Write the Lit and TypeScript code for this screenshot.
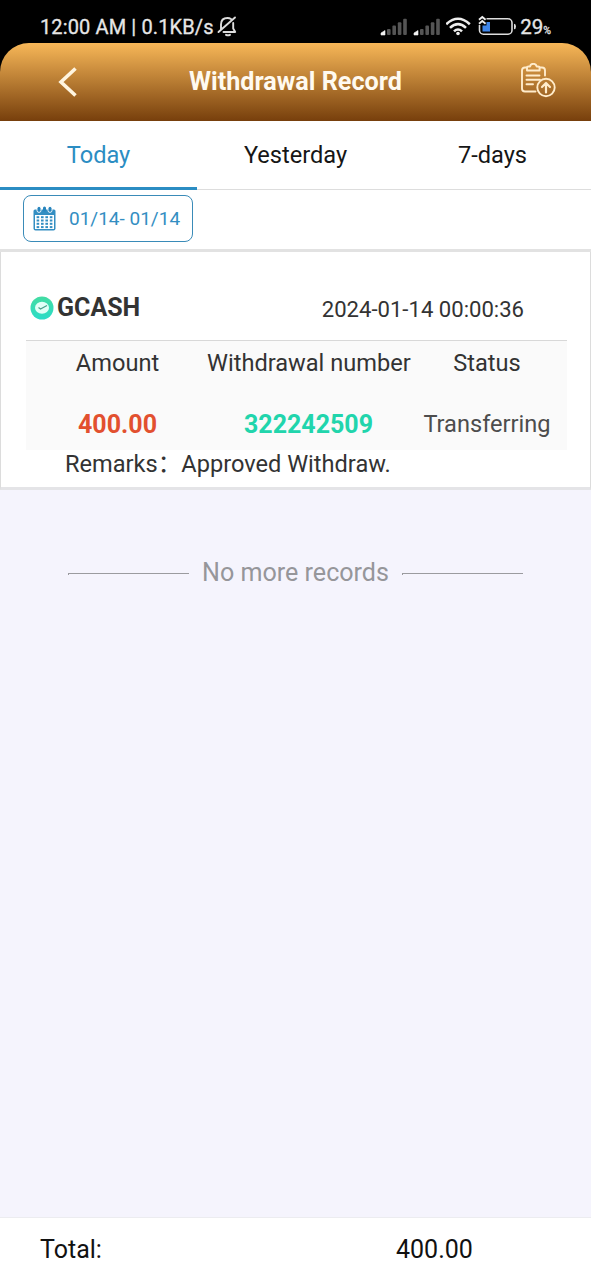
import { LitElement, html, css, svg } from "lit";
import { customElement, state } from "lit/decorators.js";

@customElement("status-bar")
class StatusBar extends LitElement {
  static styles = css`
    :host { display: flex; height: 43px; box-sizing: border-box; padding: 15px 40px 4px 40px; justify-content: space-between; color: #e6e6e6; font-size: 20px; line-height: 25px; }
    .side { display: flex; }
    .clock { width: 176px; white-space: nowrap; letter-spacing: 0.12px; -webkit-text-stroke: 0.3px #e6e6e6; }
    svg { display: block; flex: none; }
    .pct { font-size: 20.5px; margin-left: 2px; white-space: nowrap; -webkit-text-stroke: 0.3px #e6e6e6; }
    .small { font-size: 10.5px; }
  `;
  signal() {
    return html`<svg width="33" height="24" viewBox="0 0 33 24">
      <path d="M1 20v-2L5 15.500V20z" fill="#f2f2f2" stroke="#f2f2f2" stroke-width="0.600"/>
      ${[0, 1, 2, 3].map((i) => svg`<rect x=${7 + i * 5.4} y=${14 - i * 3.4} width="3.600" height=${6 + i * 3.4} rx="1" fill="#555"/>`)}
    </svg>`;
  }
  render() {
    return html`
      <div class="side">
        <span class="clock">12:00 AM | 0.1KB/s</span>
        <svg width="22" height="24" viewBox="0 0 22 24" fill="none" stroke="#ddd" stroke-width="1.9" stroke-linecap="round" stroke-linejoin="round">
          <path d="M2.5 17 19 2.5M5 14.5V9.500C5 5 8 3 11.500 3q2 0 3.500 1M17.200 8v5.500l2 3.500H7.500M10 19.800q2 1 4 0"/>
        </svg>
      </div>
      <div class="side">
        ${this.signal()}${this.signal()}
        <svg width="32" height="24" viewBox="1 0 32 24" fill="none" stroke="#eee" stroke-width="2.6">
          <path d="M1.200 9.200Q13 -1.700 24.800 9.200M5 12.900Q13 5.500 21 12.900M9 16.400Q13 12.600 17 16.400"/>
          <circle cx="13" cy="18.500" r="1.800" fill="#eee" stroke="none"/>
        </svg>
        <svg width="40" height="24" viewBox="0 0 40 24">
          <rect x="1.500" y="3.800" width="32.500" height="15.400" rx="4" fill="none" stroke="#ddd" stroke-width="1.600"/>
          <path d="M0 0h8.500v10H0z" fill="#000"/>
          <path d="M1 4.700 4.300 2 7.600 4.700M1 8.700 4.300 6 7.600 8.700" fill="none" stroke="#eee" stroke-width="1.900"/>
          <path d="M4.500 10.500H8.500V7H12v9.500H4.500z" fill="#3f86ea"/>
          <path d="M36 8.800q2 0 2 2.700t-2 2.700z" fill="#ddd"/>
        </svg>
        <span class="pct">29<span class="small">%</span></span>
      </div>`;
  }
}

@customElement("app-root")
class AppRoot extends LitElement {
  @state() active = 0;
  static styles = css`
    :host { display: flex; flex-direction: column; height: 1280px; overflow: hidden; background: #f5f4fd; font-family: Roboto, "Noto Sans CJK SC", sans-serif; font-size: 23.6px; line-height: 28px; color: #333; }
    * { box-sizing: border-box; }
    svg { display: block; flex: none; }
    .top { background: #000; }
    header { display: grid; grid-template-columns: 98px 1fr 98px; align-items: center; height: 78px; border-radius: 29px 29px 0 0; background: linear-gradient(#f7b758, #773f0c); color: #fffaf0; }
    .back { margin-left: 57px; }
    .title { text-align: center; font-size: 25.2px; font-weight: 700; white-space: nowrap; }
    .record { margin-left: 25px; }
    .tabs { display: grid; grid-template-columns: repeat(3, 1fr); height: 69px; background: #fff; border-bottom: 1px solid #ddd; color: #161616; }
    .tab { height: 69px; padding-top: 20px; text-align: center; border-bottom: 3px solid transparent; }
    .tab.on { color: #2b8dc3; border-color: #2b8dc3; }
    .filter { height: 62px; padding: 5px 0 0 23px; background: #fff; border-bottom: 3px solid #e2e2e2; }
    .range { display: flex; align-items: center; width: 170px; height: 47px; padding-left: 9px; gap: 13px; border: 1px solid #3a8bb8; border-radius: 8px; color: #338ec2; font-size: 19px; white-space: nowrap; }
    .card { height: 238px; background: #fff; border: 1px solid #dcdcdc; border-top: 0; border-bottom: 3px solid #e4e4e7; padding: 0 23px 0 25px; }
    .head { display: flex; align-items: center; height: 89px; padding: 24px 43px 0 4px; border-bottom: 1px solid #d8d8d8; }
    .bank { margin-left: 3px; font-size: 25px; line-height: 30px; font-weight: 700; flex: 1; }
    .time { font-size: 22.1px; padding-top: 1px; }
    .grid { display: grid; grid-template-columns: 183px 199px 158px; height: 109px; padding-top: 8px; background: #fafafa; text-align: center; grid-template-rows: 28px 28px; row-gap: 33px; white-space: nowrap; }
    .wide { margin-left: -2px; }
    .amount { color: #e2502f; font-weight: 700; font-size: 25px; line-height: 30px; }
    .number { color: #21d5ac; font-weight: 700; font-size: 25px; line-height: 30px; }
    .status { color: #4d4d4d; }
    .remarks { padding-left: 39px; white-space: nowrap; }
    .end { display: flex; align-items: center; justify-content: center; margin-top: 68px; gap: 13px; color: #96969a; font-size: 25.1px; line-height: 30px; }
    .rule { width: 121px; height: 2px; margin-top: 2px; border-top: 1px solid #9b9b9f; border-left: 1px solid #9b9b9f; }
    footer { display: flex; margin-top: auto; height: 63px; padding: 17px 0 0 40px; background: #fff; border-top: 1px solid #ececf0; color: #111; font-size: 25px; line-height: 30px; }
    .label { width: 356px; }
  `;
  render() {
    const tabs = ["Today", "Yesterday", "7-days"];
    return html`
      <div class="top">
        <status-bar></status-bar>
        <header>
          <svg class="back" width="22" height="32" viewBox="0 0 22 32" fill="none" stroke="#fff5e0" stroke-width="3.600"><path d="M18.500 2.500 4 16l14.500 13.500"/></svg>
          <span class="title">Withdrawal Record</span>
          <svg class="record" width="40" height="38" viewBox="0 0 40 38" fill="none" stroke="#ffeccb" stroke-width="1.900" stroke-linecap="round" stroke-linejoin="round">
            <path d="M9 4.500H7Q4 4.500 4 7.500V25.500q0 3 3 3H17.500M21.500 4.500h2.500q3 0 3 3V12.500"/>
            <path d="M9 7.500V4.500q0-1 1.500-1h1.500Q12.500 .8 15.300 .8t3.400 2.700h1.400q1.500 0 1.500 1v3zM8.500 12.500h13M8.500 16.800h13.500M8.500 21.200h6.500"/>
            <circle cx="28" cy="24.500" r="8.700"/><path d="M28 29.500v-9.500M24 24l4-4 4 4" stroke-width="2.200"/>
          </svg>
        </header>
      </div>
      <nav class="tabs">${tabs.map((t, i) => html`<div class="tab ${i === this.active ? "on" : ""}" @click=${() => (this.active = i)}>${t}</div>`)}</nav>
      <div class="filter"><div class="range">
        <svg width="23" height="25" viewBox="0 0 23 25">
          <path d="M2 3.500h19q1.500 0 1.500 1.500V22.500q0 2-2 2H2.500q-2 0-2-2V5Q.5 3.500 2 3.500z" fill="#338ec2"/>
          <path d="M2 9h19V23H2z" fill="#fff"/>
          ${[6, 17].map((x) => svg`<rect x=${x - 2} y="0.400" width="4" height="6" rx="2" fill="#2684bd" stroke="#fff" stroke-width="0.900"/>`)}
          <rect x="10" y="0.400" width="3" height="5" rx="1.500" fill="#2684bd"/>
          ${[0, 1, 2, 3].map((r) => [0, 1, 2, 3].map((c) => svg`<rect x=${3.6 + c * 4.4} y=${10.2 + r * 3.3} width="2.600" height="2" fill="#338ec2"/>`))}
        </svg>
        <span>01/14- 01/14</span>
      </div></div>
      <section class="card">
        <div class="head">
          <svg width="24" height="24" viewBox="0 0 24 24"><defs><linearGradient id="g" x2="0" y2="1"><stop stop-color="#43dca2"/><stop offset="1" stop-color="#2bdcc8"/></linearGradient></defs>
            <circle cx="12" cy="12" r="11.500" fill="url(#g)"/><ellipse cx="12" cy="11.800" rx="7" ry="6" fill="#e2fff7"/><path d="M8.500 11.500 10.500 13l6.500-3.500" fill="none" stroke="#4c9f8a" stroke-width="1.300"/></svg>
          <span class="bank">GCASH</span><span class="time">2024-01-14 00:00:36</span>
        </div>
        <div class="grid">
          <span>Amount</span><span class="wide">Withdrawal number</span><span>Status</span>
          <span class="amount">400.00</span><span class="number">322242509</span><span class="status">Transferring</span>
        </div>
        <div class="remarks">Remarks：Approved Withdraw.</div>
      </section>
      <div class="end"><i class="rule"></i><span>No more records</span><i class="rule"></i></div>
      <footer><span class="label">Total:</span><span>400.00</span></footer>`;
  }
}
